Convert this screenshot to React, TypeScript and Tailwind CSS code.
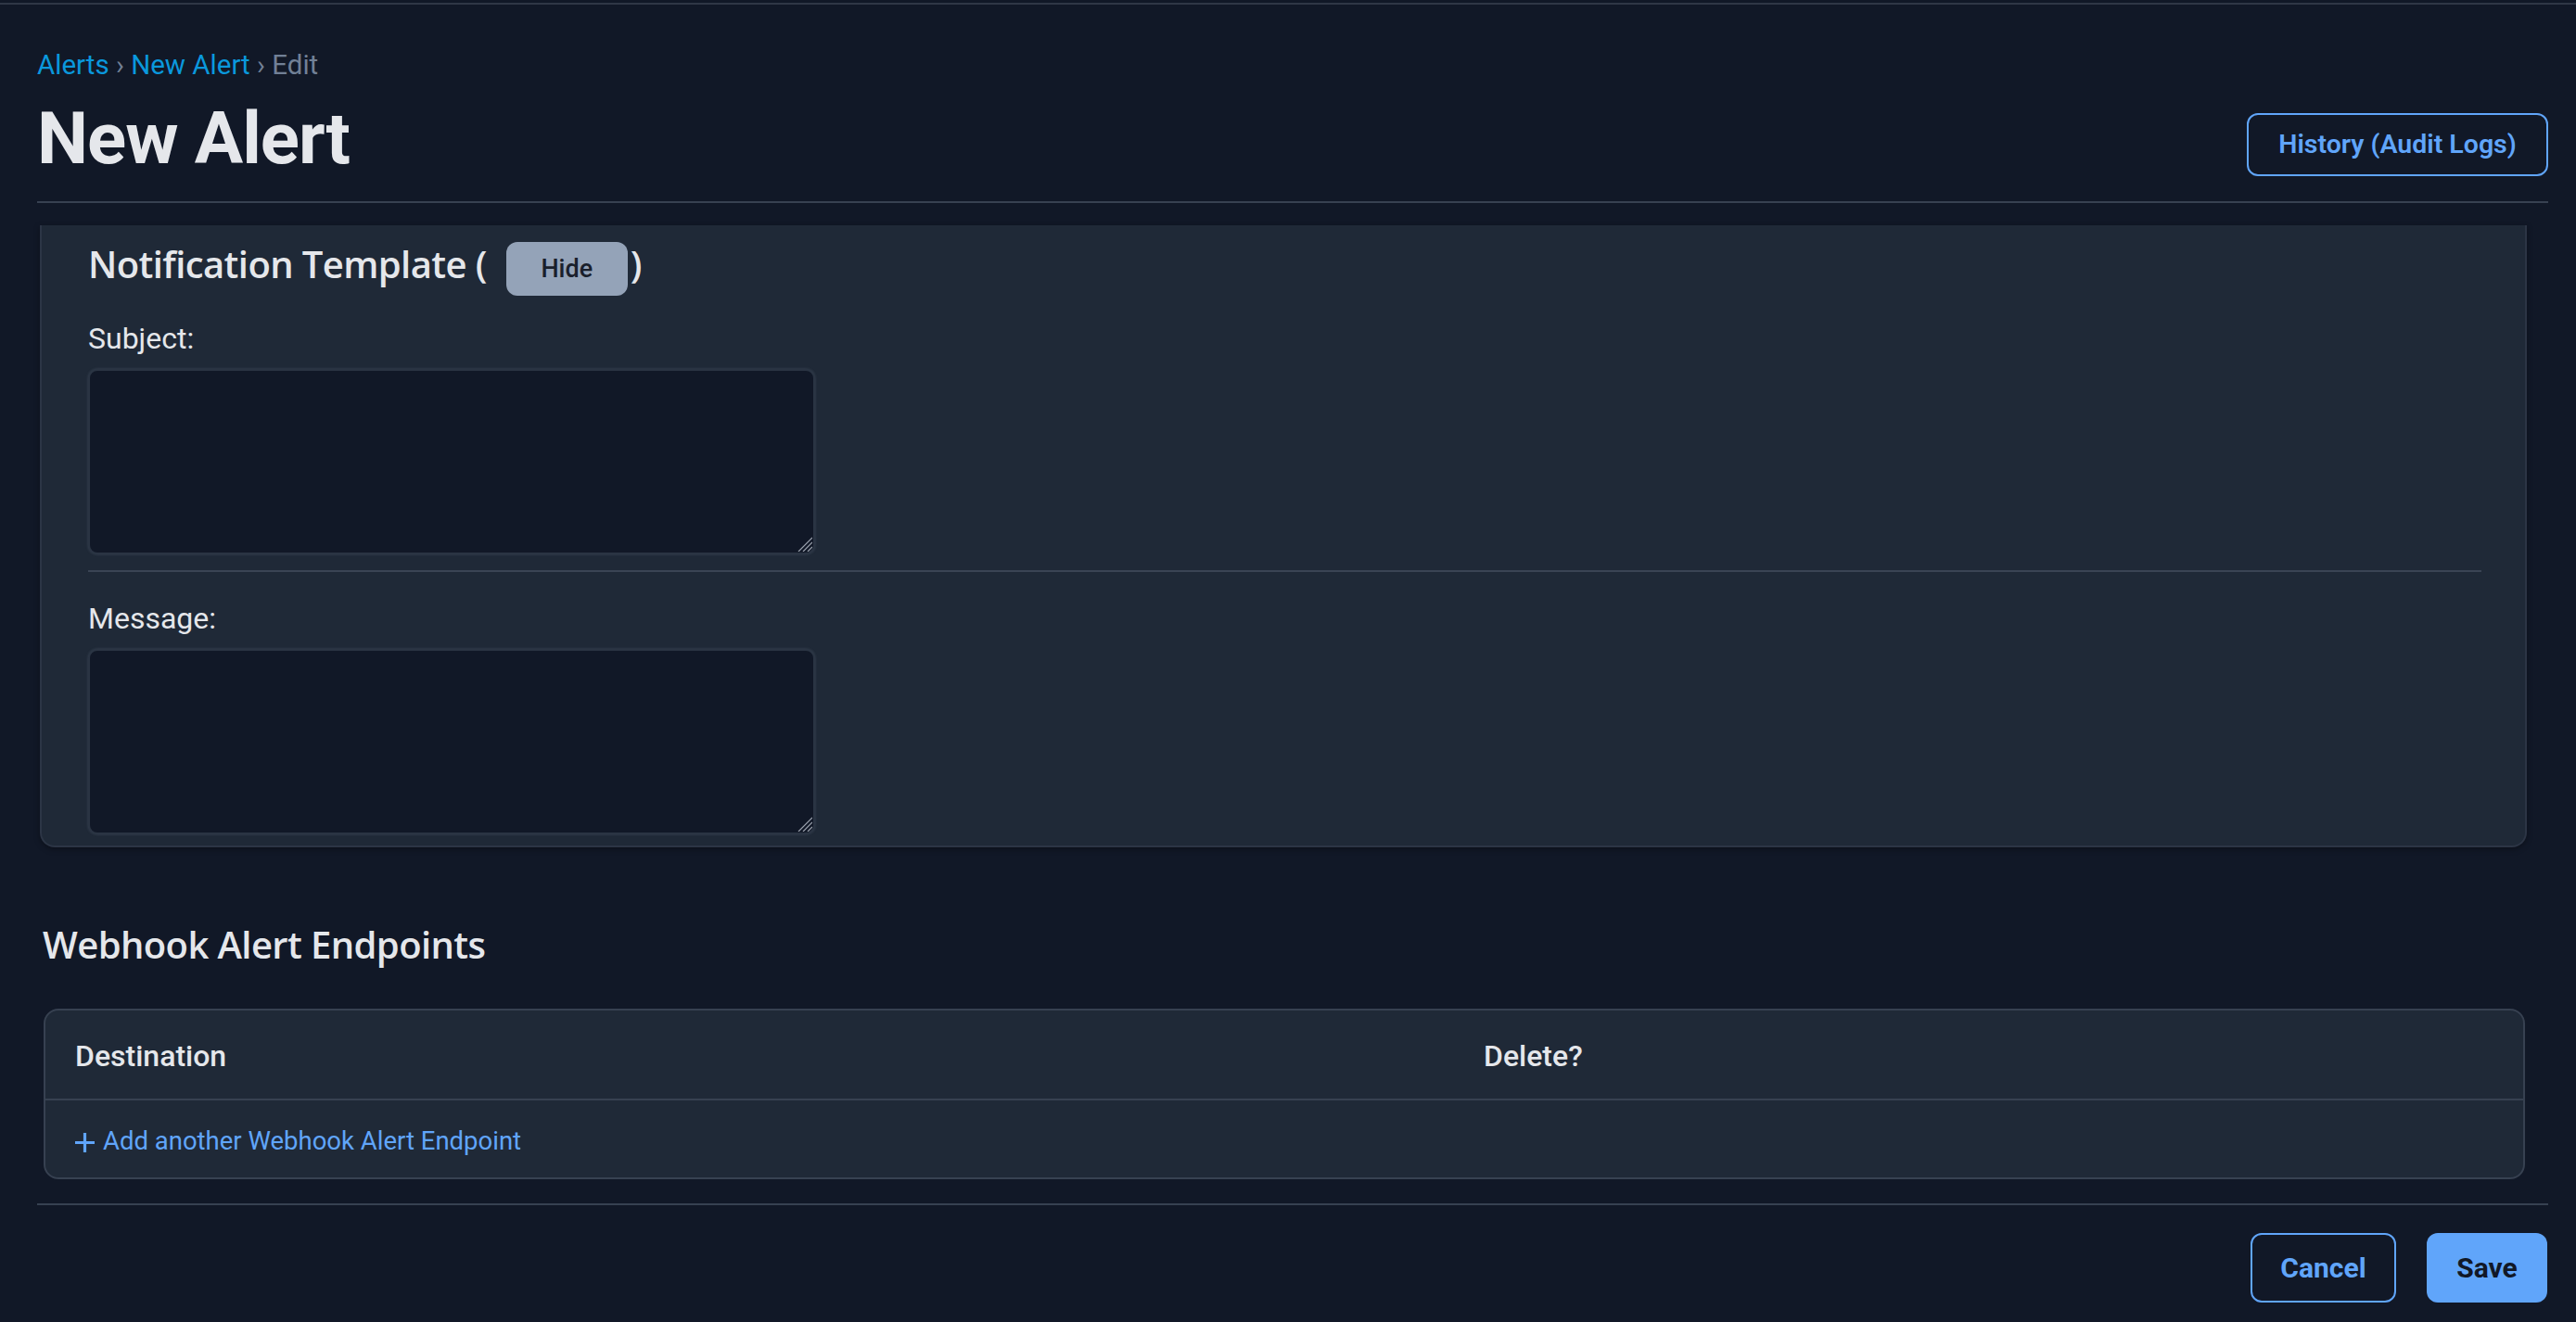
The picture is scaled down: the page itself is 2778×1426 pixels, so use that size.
// Edit page for a single alert: header, notification template card, webhook endpoints table, footer actions

const headingFont = "font-['Open_Sans',sans-serif]";

function Breadcrumbs() {
  return (
    <nav className="mt-[45px] h-[40px] text-[29.5px] leading-[40px] whitespace-nowrap">
      <a className="text-[#0a98dd]">Alerts</a>
      <span className="text-[#718096]"> › </span>
      <a className="text-[#0a98dd]">New Alert</a>
      <span className="text-[#718096]"> › Edit</span>
    </nav>
  );
}

function Field({ label, top }: { label: string; top: string }) {
  return (
    <div className={top}>
      <label className="block h-[44px] text-[32px] leading-[44px] text-[#e5e7eb]">{label}</label>
      <div className="relative mt-[11px] w-[784px]">
        <textarea className="block h-[200px] w-full resize-none rounded-[10px] border-2 border-[#2a3443] bg-[#111827] p-3 text-[28px] text-[#e5e7eb] shadow-[0_0_3px_rgba(148,163,184,0.25)] outline-none" />
        {/* resize grip */}
        <svg width="16" height="16" viewBox="0 0 16 16" className="pointer-events-none absolute right-[3px] bottom-[3px]">
          <path d="M16 1L1 16M16 6L6 16M16 11L11 16" stroke="#9ca3af" strokeWidth="1.2" />
        </svg>
      </div>
    </div>
  );
}

export default function App() {
  return (
    <div className="min-h-screen bg-[#111827] font-['Roboto',sans-serif] text-[#e5e7eb]">
      <div className="pt-[3px]">
        <div className="h-[2px] bg-[#2f3746]" />
      </div>

      <div className="pl-[40px] pr-[30px]">
        {/* Header */}
        <header className="flex items-end justify-between">
          <div>
            <Breadcrumbs />
            <h1 className="mt-[20px] h-[80px] text-[78px] leading-[80px] font-bold tracking-[-1px] text-[#e5e7eb]">
              New Alert
            </h1>
          </div>
          <button className="flex h-[68px] w-[325px] items-center justify-center rounded-[12px] border-2 border-[#60a5fa] text-[28.5px] font-semibold text-[#60a5fa]">
            History (Audit Logs)
          </button>
        </header>
        <div className="mt-[27px] h-[2px] bg-[#374151]" />

        {/* Scrolled content */}
        <main className="mt-[24px]">
          <section className="ml-[3px] mr-[23px] rounded-b-[16px] border-x-2 border-b-2 border-[#2c3545] bg-[#1f2937] pt-[12px] pb-[12px] pl-[50px] pr-[47px] shadow-[0_2px_6px_rgba(0,0,0,0.35)]">
            <div className="flex items-start">
              <h2 className={`${headingFont} text-[40px] leading-[60px] font-semibold tracking-[-0.6px] text-[#e5e7eb]`}>
                Notification Template (
              </h2>
              <button className="mt-[6px] ml-[21px] h-[58px] w-[131px] rounded-[12px] bg-[#94a3b8] text-[27px] font-medium text-[#1a202c]">
                Hide
              </button>
              <span className={`${headingFont} ml-[3px] text-[40px] leading-[60px] font-semibold text-[#e5e7eb]`}>)</span>
            </div>

            <Field label="Subject:" top="mt-[24px]" />
            <div className="mt-[17px] h-[2px] bg-[#3a4454]" />
            <Field label="Message:" top="mt-[28px]" />
          </section>

          <h2 className={`${headingFont} mt-[75px] ml-[6px] text-[40px] leading-[60px] font-semibold tracking-[-0.6px] text-[#e5e7eb]`}>
            Webhook Alert Endpoints
          </h2>

          <div className="mt-[39px] ml-[7px] mr-[25px] overflow-hidden rounded-[16px] border-2 border-[#374151] bg-[#1f2937]">
            <div className="grid grid-cols-[1519px_1fr] border-b-2 border-[#374151]">
              <div className="pl-[32px] pt-[27px] pb-[24px] text-[32px] leading-[44px] font-medium">Destination</div>
              <div className="pl-[32px] pt-[27px] pb-[24px] text-[32px] leading-[44px] font-medium">Delete?</div>
            </div>
            <div className="pl-[32px] pt-[24px] pb-[19px]">
              <a className="flex h-[40px] items-center text-[27.5px] leading-[40px] text-[#60a5fa]">
                <svg width="21" height="21" viewBox="0 0 21 21" className="mt-[2px]">
                  <path d="M10.5 0v21M0 10.5h21" stroke="currentColor" strokeWidth="3.2" />
                </svg>
                <span className="ml-[9px]">Add another Webhook Alert Endpoint</span>
              </a>
            </div>
          </div>
        </main>

        {/* Footer */}
        <div className="mt-[26px] h-[2px] bg-[#374151]" />
        <footer className="mt-[30px] flex justify-end gap-[33px] pr-[1px]">
          <button className="h-[75px] w-[157px] rounded-[12px] border-2 border-[#60a5fa] text-[30px] font-bold text-[#60a5fa]">
            Cancel
          </button>
          <button className="h-[75px] w-[130px] rounded-[12px] bg-[#60a5fa] text-[30px] font-bold text-[#111827]">
            Save
          </button>
        </footer>
      </div>
    </div>
  );
}
